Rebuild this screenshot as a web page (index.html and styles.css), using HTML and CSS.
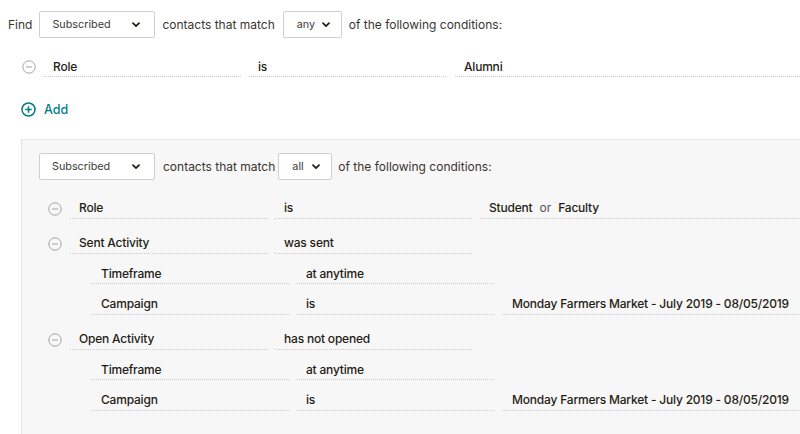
FILE: index.html
```html
<!DOCTYPE html>
<html>
<head>
<meta charset="utf-8">
<link rel="stylesheet" href="styles.css">
</head>
<body>
<div class="page">
  <div class="find-line">
    <span class="lbl">Find</span>
    <div class="select sel-status"><span>Subscribed</span><svg class="chev" viewBox="0 0 8 6" width="8" height="6"><path d="M1 1.2l3 3 3-3" /></svg></div>
    <span class="lbl">contacts that match</span>
    <div class="select sel-any"><span>any</span><svg class="chev" viewBox="0 0 8 6" width="8" height="6"><path d="M1 1.2l3 3 3-3" /></svg></div>
    <span class="lbl">of the following conditions:</span>
  </div>

  <div class="cond-row top-row">
    <span class="remove"><svg viewBox="0 0 14 14" width="14" height="14"><circle cx="7" cy="7" r="6.2"/><path d="M4 7h6"/></svg></span>
    <div class="cell field">Role</div>
    <div class="cell op">is</div>
    <div class="cell value">Alumni</div>
  </div>

  <div class="add"><svg viewBox="0 0 15 15" width="15" height="15"><circle cx="7.5" cy="7.5" r="6.5"/><path d="M7.5 4.3v6.4M4.3 7.5h6.4"/></svg><span>Add</span></div>

  <div class="group">
    <div class="find-line inner-line">
      <div class="select sel-status"><span>Subscribed</span><svg class="chev" viewBox="0 0 8 6" width="8" height="6"><path d="M1 1.2l3 3 3-3" /></svg></div>
      <span class="lbl">contacts that match</span>
      <div class="select sel-all"><span>all</span><svg class="chev" viewBox="0 0 8 6" width="8" height="6"><path d="M1 1.2l3 3 3-3" /></svg></div>
      <span class="lbl">of the following conditions:</span>
    </div>

    <div class="cond">
      <div class="cond-row">
        <span class="remove"><svg viewBox="0 0 14 14" width="14" height="14"><circle cx="7" cy="7" r="6.2"/><path d="M4 7h6"/></svg></span>
        <div class="cell field">Role</div>
        <div class="cell op">is</div>
        <div class="cell value">Student <span class="or">or</span> Faculty</div>
      </div>
    </div>

    <div class="cond">
      <div class="cond-row">
        <span class="remove"><svg viewBox="0 0 14 14" width="14" height="14"><circle cx="7" cy="7" r="6.2"/><path d="M4 7h6"/></svg></span>
        <div class="cell field">Sent Activity</div>
        <div class="cell op">was sent</div>
      </div>
      <div class="sub-row">
        <div class="cell field">Timeframe</div>
        <div class="cell op">at anytime</div>
      </div>
      <div class="sub-row">
        <div class="cell field">Campaign</div>
        <div class="cell op">is</div>
        <div class="cell value">Monday Farmers Market - July 2019 - 08/05/2019</div>
      </div>
    </div>

    <div class="cond">
      <div class="cond-row">
        <span class="remove"><svg viewBox="0 0 14 14" width="14" height="14"><circle cx="7" cy="7" r="6.2"/><path d="M4 7h6"/></svg></span>
        <div class="cell field">Open Activity</div>
        <div class="cell op">has not opened</div>
      </div>
      <div class="sub-row">
        <div class="cell field">Timeframe</div>
        <div class="cell op">at anytime</div>
      </div>
      <div class="sub-row">
        <div class="cell field">Campaign</div>
        <div class="cell op">is</div>
        <div class="cell value">Monday Farmers Market - July 2019 - 08/05/2019</div>
      </div>
    </div>
  </div>
</div>
</body>
</html>
```

FILE: styles.css
```css
* { box-sizing: border-box; }
html, body { margin: 0; padding: 0; background: #fff; }
body {
  width: 800px;
  height: 434px;
  overflow: hidden;
  font-family: Inter, "Liberation Sans", sans-serif;
  color: #241c15;
}
.page {
  padding: 11px 0 0 8px;
  width: 800px;
}
.find-line {
  display: flex;
  align-items: center;
  height: 27px;
  font-size: 12px;
}
.lbl { color: #3b3430; white-space: nowrap; }
.select {
  display: flex;
  align-items: center;
  justify-content: space-between;
  height: 27px;
  border: 1px solid #cfcfcf;
  border-radius: 2px;
  background: #fff;
  font-size: 10.8px;
  color: #3a3a3a;
  padding: 0 14px 0 12px;
}
.chev { fill: none; stroke: #241c15; stroke-width: 1.7; stroke-linecap: round; stroke-linejoin: round; }
.sel-status { width: 116px; margin: 0 7px 0 7px; }
.sel-any { width: 59px; margin: 0 7px 0 8px; padding: 0 11px 0 13px; }
.inner-line .sel-status { margin: 0 8px 0 0; width: 116px; }
.sel-all { width: 54px; margin: 0 6px 0 3px; padding: 0 11px 0 13px; }

.cond-row, .sub-row {
  display: flex;
  align-items: flex-end;
}
.cell {
  height: 30.5px;
  padding: 11px 0 0 9px;
  line-height: 18px;
  font-size: 12px;
  letter-spacing: -0.2px;
  font-weight: 500;
  border-bottom: 1px dotted #c9c9c9;
  white-space: nowrap;
}
.field { width: 197px; margin-right: 8px; }
.op { width: 197px; margin-right: 8px; }
.value { flex: 1; }
.or { font-weight: 400; color: #555; margin: 0 4px; letter-spacing: 0; }

.remove {
  width: 14px;
  height: 14px;
  margin: 0 8px 3px 0;
  display: flex;
}
.remove svg { fill: none; stroke: #a3a3a3; stroke-width: 1; }

.top-row { margin: 8.5px 0 0 14px; }
.top-row .op { width: 197px; margin-right: 9px; }

.add {
  display: flex;
  align-items: center;
  margin: 24px 0 0 13px;
  height: 17px;
  color: #007c89;
  font-size: 12.5px;
  font-weight: 500;
}
.add svg { fill: none; stroke: #007c89; stroke-width: 1.5; margin-right: 8px; }

.group {
  margin: 21px 0 0 13px;
  width: 800px;
  height: 300px;
  background: #f7f7f7;
  border-top: 1px solid #e3e3e3;
  border-left: 1px solid #e3e3e3;
  padding: 13px 0 0 17px;
}
.inner-line { margin-bottom: 8px; }
.cond { margin-bottom: 4.5px; }
.cond .cond-row { padding-left: 9px; }
.sub-row { padding-left: 53px; }
.sub-row .op { margin-right: 9px; }
```
